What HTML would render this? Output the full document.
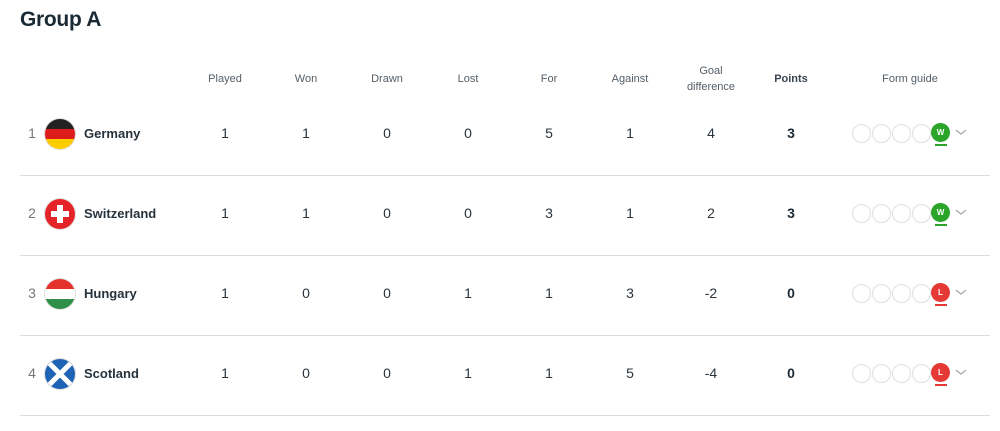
<!DOCTYPE html>
<html><head><meta charset="utf-8"><style>
body{margin:0;width:1000px;height:431px;background:#fff;font-family:"Liberation Sans",sans-serif;position:relative;overflow:hidden;color:#1e2b36}
.a{position:absolute}
h1{position:absolute;left:20px;top:8px;margin:0;font-size:21px;font-weight:600;color:#1a2a35;letter-spacing:-0.3px}
.h{position:absolute;font-size:11px;color:#555e66;text-align:center;width:80px;margin-left:-40px;line-height:16px}
.c{position:absolute;font-size:14px;text-align:center;width:40px;margin-left:-20px;color:#2a333b}
.b{font-weight:bold;color:#1e2b36}
.line{position:absolute;left:20px;width:970px;height:1px;background:#dcdcdc}
.rk{position:absolute;left:26px;font-size:14px;color:#777;width:12px;text-align:center}
.nm{position:absolute;left:84px;font-size:13px;font-weight:600;color:#26323c}
.flag{position:absolute;left:45px;width:30px;height:30px;border-radius:50%;overflow:hidden;box-shadow:0 0 0 1px #ddd}
.e{position:absolute;width:17px;height:17px;border:1px solid #dedede;border-radius:50%}
.r{position:absolute;width:19px;height:19px;border-radius:50%;color:#fff;font-size:8px;font-weight:bold;text-align:center;line-height:19px}
.u{position:absolute;width:12px;height:2px}
</style></head><body>
<h1>Group A</h1>
<div class="h" style="left:225px;top:71px">Played</div>
<div class="h" style="left:306px;top:71px">Won</div>
<div class="h" style="left:387px;top:71px">Drawn</div>
<div class="h" style="left:468px;top:71px">Lost</div>
<div class="h" style="left:549px;top:71px">For</div>
<div class="h" style="left:630px;top:71px">Against</div>
<div class="h" style="left:711px;top:63px">Goal<br>difference</div>
<div class="h" style="left:791px;top:71px;font-weight:bold;color:#3a4550">Points</div>
<div class="h" style="left:910px;top:71px">Form guide</div>
<div id="rows"></div>
<script>
var d=[["1","Germany",[1,1,0,0,5,1,4,3],"W","de"],["2","Switzerland",[1,1,0,0,3,1,2,3],"W","ch"],["3","Hungary",[1,0,0,1,1,3,-2,0],"L","hu"],["4","Scotland",[1,0,0,1,1,5,-4,0],"L","sc"]];
var xs=[225,306,387,468,549,630,711,791],h="";
var flags={
de:'<div style="height:10px;background:#222"></div><div style="height:10px;background:#dd1c1c"></div><div style="height:10px;background:#ffce00"></div>',
ch:'<div style="width:30px;height:30px;background:#e5242a;position:relative"><div style="position:absolute;left:12px;top:6px;width:6px;height:18px;background:#fff"></div><div style="position:absolute;left:6px;top:12px;width:18px;height:6px;background:#fff"></div></div>',
hu:'<div style="height:10px;background:#e4322b"></div><div style="height:10px;background:#fff"></div><div style="height:10px;background:#2f8e47"></div>',
sc:'<svg width="30" height="30"><rect width="30" height="30" fill="#1f63b5"/><path d="M0 0L30 30M30 0L0 30" stroke="#fff" stroke-width="5"/></svg>'};
d.forEach(function(r,i){var cy=133+80*i;
h+='<div class="rk" style="top:'+(cy-8)+'px">'+r[0]+'</div>';
h+='<div class="flag" style="top:'+(cy-14)+'px">'+flags[r[4]]+'</div>';
h+='<div class="nm" style="top:'+(cy-7)+'px">'+r[1]+'</div>';
r[2].forEach(function(v,j){h+='<div class="c'+(j==7?' b':'')+'" style="left:'+xs[j]+'px;top:'+(cy-8)+'px">'+v+'</div>';});
for(var k=0;k<4;k++)h+='<div class="e" style="left:'+(852+20*k)+'px;top:'+(cy-9)+'px"></div>';
var col=r[3]=="W"?"#2aa52a":"#e53935";
h+='<div class="r" style="left:931px;top:'+(cy-10)+'px;background:'+col+'">'+r[3]+'</div>';
h+='<div class="u" style="left:935px;top:'+(cy+11)+'px;background:'+col+'"></div>';
h+='<svg class="a" style="left:955px;top:'+(cy-4)+'px" width="12" height="7"><path d="M1 1L6 5L11 1" stroke="#aaa" stroke-width="1.3" fill="none"/></svg>';
h+='<div class="line" style="top:'+(cy+42)+'px"></div>';});
document.getElementById("rows").innerHTML=h;
</script>
</body></html>
